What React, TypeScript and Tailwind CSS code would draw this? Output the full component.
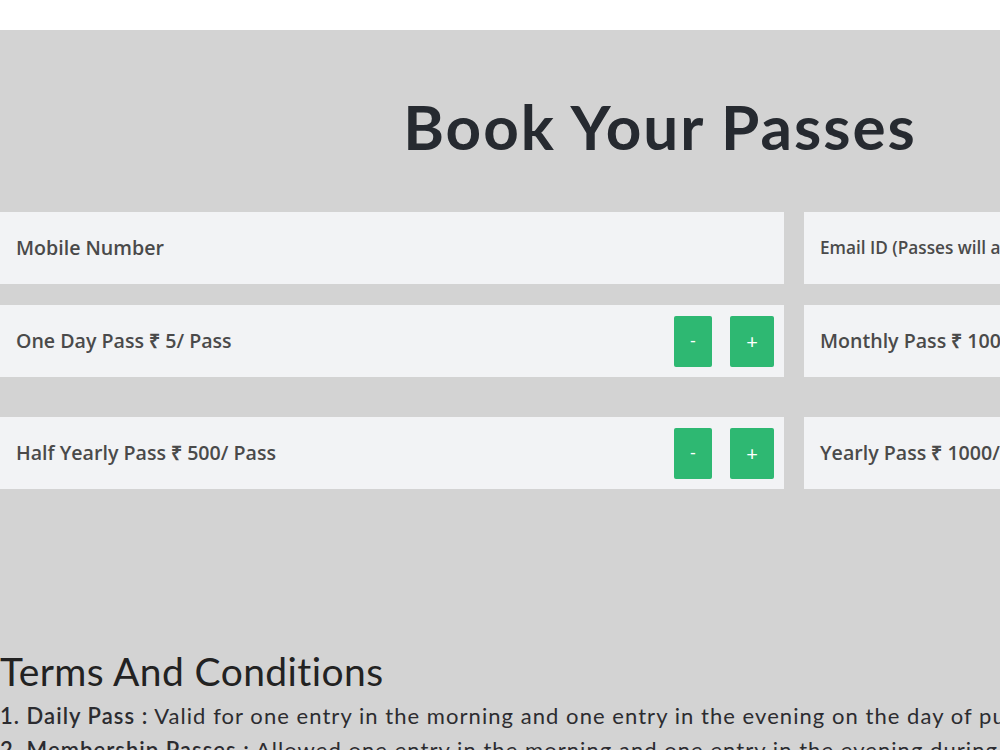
const cards: [string, string][] = [
  ["One Day Pass ₹ 5/ Pass", "Monthly Pass ₹ 100/ Pass"],
  ["Half Yearly Pass ₹ 500/ Pass", "Yearly Pass ₹ 1000/ Pass"],
]

function Counter() {
  return (
    <div className="flex items-center gap-[18px] pr-[10px]">
      <button className="flex h-[51px] w-[38px] items-center justify-center rounded-[2px] bg-[#2eb872] text-[17px] text-white">
        -
      </button>
      <button className="flex h-[51px] w-[44px] items-center justify-center rounded-[2px] bg-[#2eb872] text-[20px] text-white">
        +
      </button>
    </div>
  )
}

function Card({ label, counter, small }: { label: string; counter?: boolean; small?: boolean }) {
  return (
    <div className="flex h-[72px] w-[784px] shrink-0 items-center justify-between bg-[#f2f3f5] pl-4">
      <span
        className={
          small
            ? "text-[17.2px] font-semibold text-[#4a4a4a] [font-family:'Open_Sans',sans-serif]"
            : "text-[19.6px] font-semibold text-[#4a4a4a] [font-family:'Open_Sans',sans-serif]"
        }
      >
        {label}
      </span>
      {counter && <Counter />}
    </div>
  )
}

export default function App() {
  return (
    <div className="h-[750px] w-[1000px] overflow-hidden bg-white">
      <div className="h-[30px]" />
      <div className="h-[720px] w-[1600px] bg-[#d3d3d3] [font-family:Lato,sans-serif]">
        <h1 className="w-[1320px] pt-[56px] text-center text-[62px] font-bold leading-[80px] tracking-[2px] text-[#262a30]">
          Book Your Passes
        </h1>
        <div className="mt-[46px] flex gap-[20px]">
          <Card label="Mobile Number" />
          <Card label="Email ID (Passes will arrive on this email)" small />
        </div>
        <div className="mt-[21px] flex gap-[20px]">
          <Card label={cards[0][0]} counter />
          <Card label={cards[0][1]} counter />
        </div>
        <div className="mt-[40px] flex gap-[20px]">
          <Card label={cards[1][0]} counter />
          <Card label={cards[1][1]} counter />
        </div>
        <h2 className="mt-[160px] text-[39px] leading-[44px] tracking-[0.4px] text-[#222]">
          Terms And Conditions
        </h2>
        <div className="mt-[9px] flex flex-col gap-[6px] text-[22px] leading-[28px] tracking-[1.05px] text-[#2c2c30]">
          <p>
            <b className="font-semibold">1. Daily Pass :</b> Valid for one entry in the morning and one entry in the evening on the day of purchase.
          </p>
          <p>
            <b className="font-semibold">2. Membership Passes :</b> Allowed one entry in the morning and one entry in the evening during the validity.
          </p>
        </div>
      </div>
    </div>
  )
}
